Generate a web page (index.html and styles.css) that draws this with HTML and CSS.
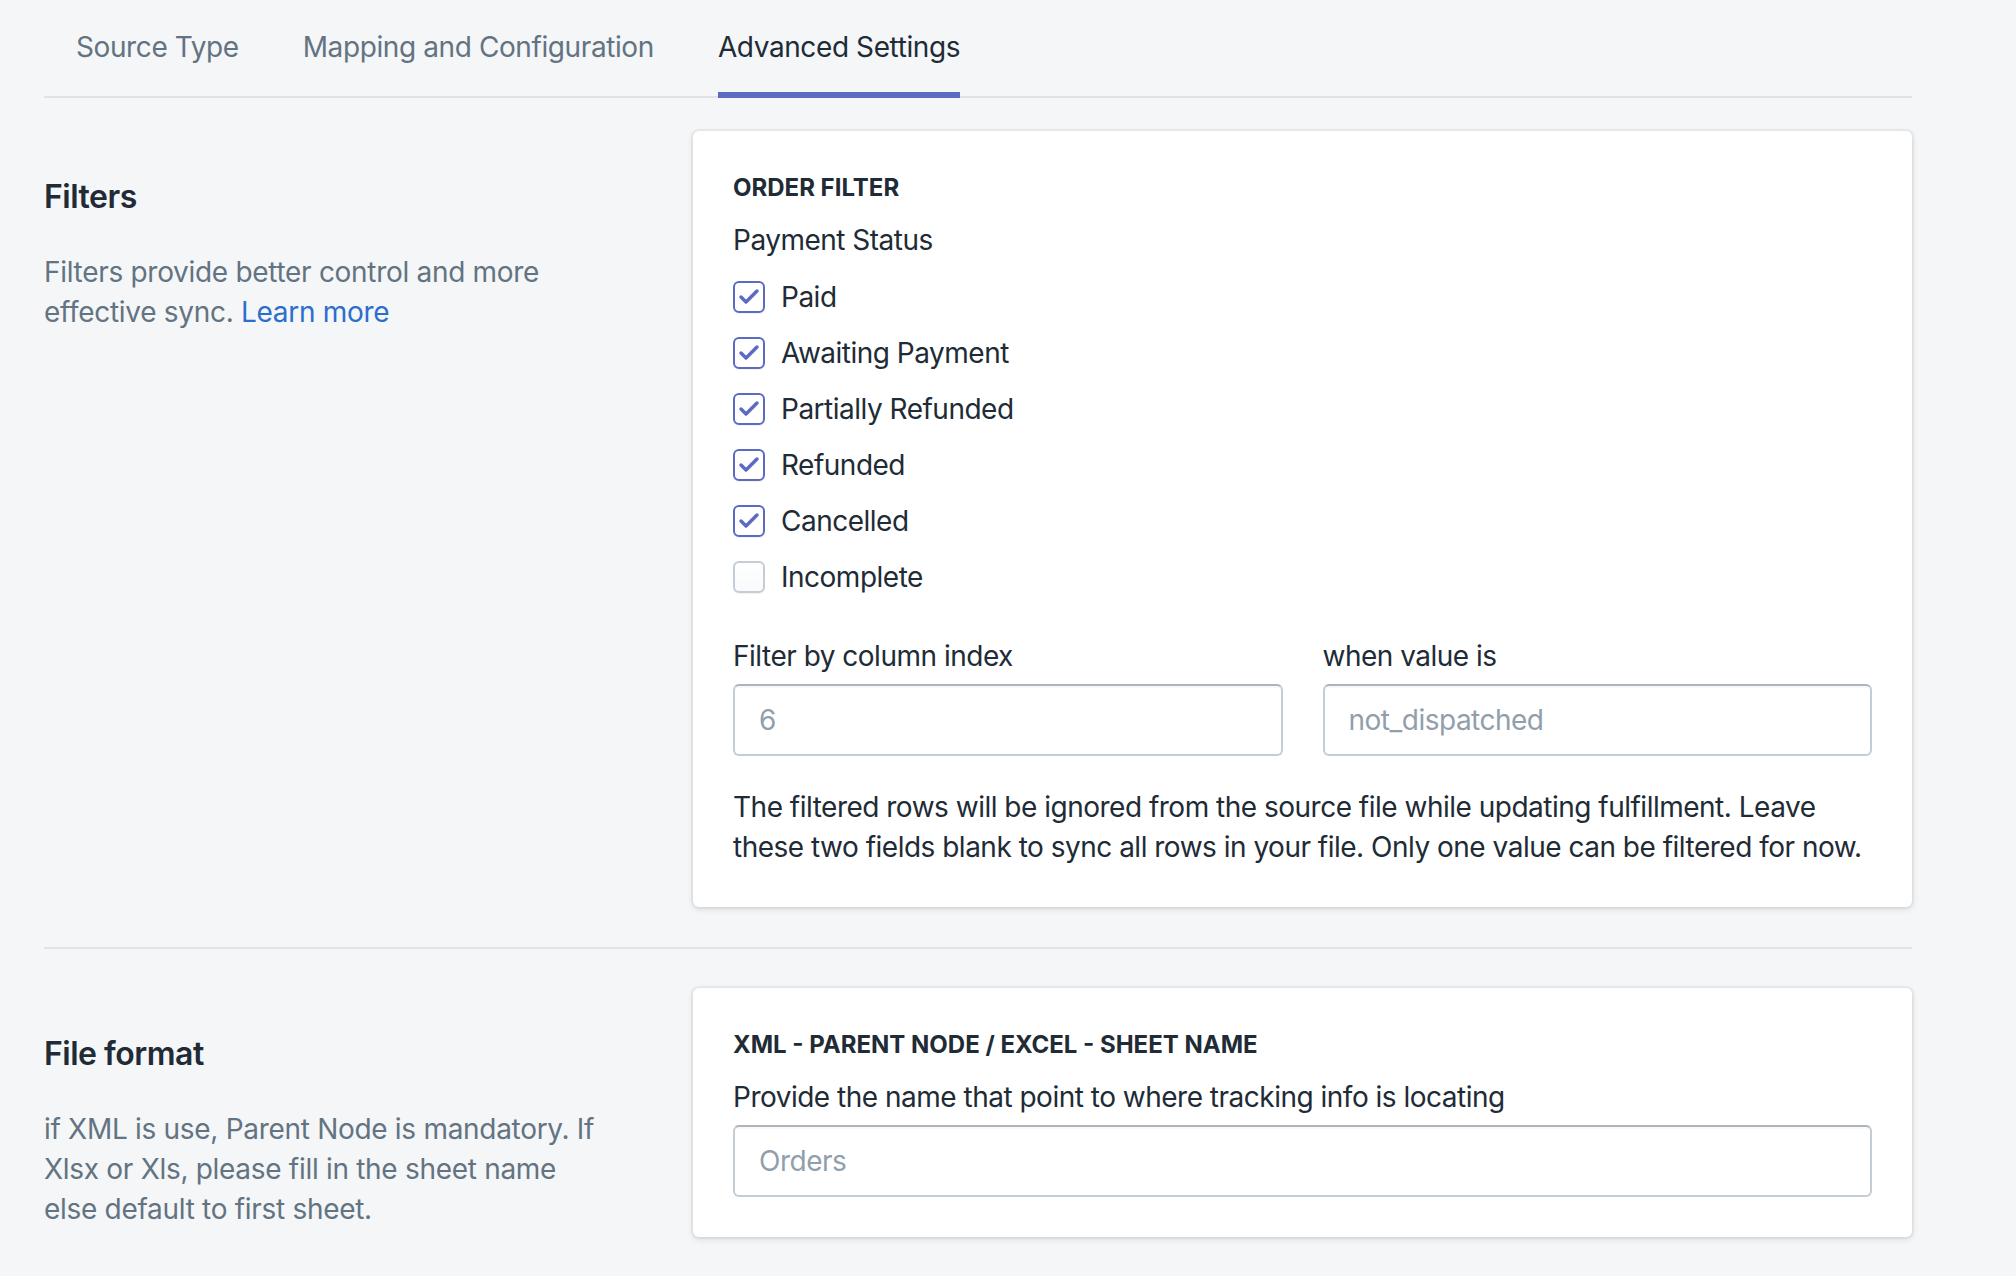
FILE: index.html
```html
<!DOCTYPE html>
<html lang="en">
<head>
  <meta charset="UTF-8">
  <title>Advanced Settings</title>
  <link rel="stylesheet" href="styles.css">
</head>
<body>

  <div class="page">

    <nav class="tabs">
      <div class="tab"><span class="tab-title">Source Type</span></div>
      <div class="tab"><span class="tab-title">Mapping and Configuration</span></div>
      <div class="tab active"><span class="tab-title">Advanced Settings</span></div>
    </nav>

    <!-- Filters -->
    <section class="annotated">
      <div class="annotation">
        <h2>Filters</h2>
        <p>Filters provide better control and more effective sync. <a href="#">Learn more</a></p>
      </div>

      <div class="card">
        <h3 class="subheading">Order filter</h3>
        <div class="choice-title">Payment Status</div>

        <ul class="choices">
          <li class="choice">
            <span class="checkbox checked"><svg viewBox="0 0 28 28"><polyline points="6,14 11,19 22,8"/></svg></span>
            Paid
          </li>
          <li class="choice">
            <span class="checkbox checked"><svg viewBox="0 0 28 28"><polyline points="6,14 11,19 22,8"/></svg></span>
            Awaiting Payment
          </li>
          <li class="choice">
            <span class="checkbox checked"><svg viewBox="0 0 28 28"><polyline points="6,14 11,19 22,8"/></svg></span>
            Partially Refunded
          </li>
          <li class="choice">
            <span class="checkbox checked"><svg viewBox="0 0 28 28"><polyline points="6,14 11,19 22,8"/></svg></span>
            Refunded
          </li>
          <li class="choice">
            <span class="checkbox checked"><svg viewBox="0 0 28 28"><polyline points="6,14 11,19 22,8"/></svg></span>
            Cancelled
          </li>
          <li class="choice">
            <span class="checkbox"></span>
            Incomplete
          </li>
        </ul>

        <div class="field-group">
          <div class="field">
            <label class="label">Filter by column index</label>
            <input class="text-input" type="text" placeholder="6">
          </div>
          <div class="field">
            <label class="label">when value is</label>
            <input class="text-input" type="text" placeholder="not_dispatched">
          </div>
        </div>

        <p class="help">The filtered rows will be ignored from the source file while updating fulfillment. Leave these two fields blank to sync all rows in your file. Only one value can be filtered for now.</p>
      </div>
    </section>

    <!-- File format -->
    <section class="annotated divided">
      <div class="annotation">
        <h2>File format</h2>
        <p>if XML is use, Parent Node is mandatory. If Xlsx or Xls, please fill in the sheet name else default to first sheet.</p>
      </div>

      <div class="card">
        <h3 class="subheading">XML - Parent node / Excel - Sheet name</h3>
        <div class="field">
          <label class="label">Provide the name that point to where tracking info is locating</label>
          <input class="text-input" type="text" placeholder="Orders">
        </div>
      </div>
    </section>

  </div>

</body>
</html>
```

FILE: styles.css
```css
body {
  margin: 0;
  background: #f4f6f8;
  color: #212b36;
  font-family: Inter, "Noto Sans", sans-serif;
  font-size: 28px;
  line-height: 40px;
  letter-spacing: -0.5px;
}

.page {
  padding: 0 104px 0 44px;
}

/* Tabs */
.tabs {
  display: flex;
  border-bottom: 2px solid #dfe3e8;
}

.tab {
  padding: 0 32px;
  color: #637381;
  letter-spacing: -0.4px;
}

.tab-title {
  display: block;
  padding: 27px 0 25px;
  line-height: 40px;
  border-bottom: 6px solid transparent;
  margin-bottom: -2px;
}

.tab.active {
  color: #212b36;
}

.tab.active .tab-title {
  border-bottom-color: #5c6ac4;
}

/* Annotated sections */
.annotated {
  display: flex;
  align-items: flex-start;
  gap: 40px;
  margin-top: 33px;
}

.annotated.divided {
  margin-top: 40px;
  border-top: 2px solid #dfe3e8;
  padding-top: 39px;
}

.annotation {
  width: 560px;
  flex: none;
  padding: 42px 49px 40px 0;
}

.annotation h2 {
  margin: 0;
  font-size: 32px;
  line-height: 48px;
  font-weight: 600;
}

.annotation p {
  margin: 31px 0 0;
  color: #637381;
  letter-spacing: -0.3px;
}

.annotation a {
  color: #2c6ecb;
  text-decoration: none;
}

/* Card */
.card {
  flex: 1;
  background: #fff;
  border-radius: 6px;
  padding: 41px 40px 40px;
  box-shadow: 0 0 0 2px rgba(63, 63, 68, 0.05), 0 2px 6px 0 rgba(63, 63, 68, 0.15);
}

.subheading {
  margin: 0 0 16px;
  font-size: 24px;
  line-height: 32px;
  font-weight: 700;
  letter-spacing: 0;
  text-transform: uppercase;
}

.choice-title {
  margin-bottom: 9px;
}

.choices {
  list-style: none;
  margin: 0;
  padding: 0;
}

.choice {
  display: flex;
  align-items: center;
  gap: 16px;
  height: 56px;
}

.checkbox {
  width: 28px;
  height: 28px;
  border: 2px solid #c4cdd5;
  border-radius: 6px;
  background: linear-gradient(180deg, #fff, #f9fafb);
  box-shadow: 0 1px 0 rgba(22, 29, 37, 0.05);
}

.checkbox.checked {
  border-color: #5c6ac4;
  background: #fff;
}

.checkbox svg {
  display: block;
  width: 28px;
  height: 28px;
  fill: none;
  stroke: #5c6ac4;
  stroke-width: 3.4;
  stroke-linecap: round;
  stroke-linejoin: round;
}

/* Fields */
.field-group {
  display: flex;
  gap: 40px;
  margin-top: 31px;
}

.field-group .field {
  flex: 1;
}

.label {
  display: block;
  margin-bottom: 8px;
}

.text-input {
  display: block;
  box-sizing: border-box;
  width: 100%;
  height: 72px;
  padding: 0 24px;
  border: 2px solid #c4cdd5;
  border-top-color: #aeb4b9;
  border-radius: 6px;
  box-shadow: inset 0 2px 0 0 rgba(99, 115, 129, 0.05);
  font-family: inherit;
  font-size: 28px;
  letter-spacing: -0.5px;
  color: #212b36;
  background: #fff;
}

.text-input::placeholder {
  color: #919eab;
}

.help {
  margin: 31px 0 0;
}
```
